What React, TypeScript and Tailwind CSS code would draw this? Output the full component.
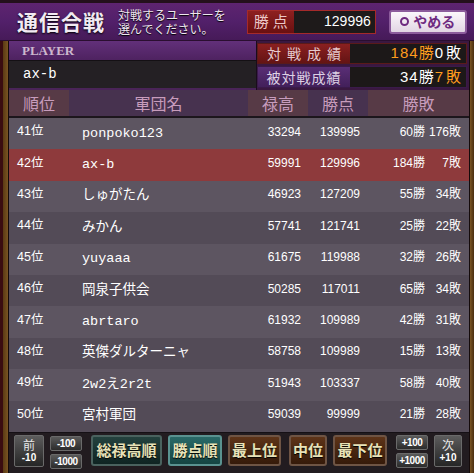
const rows = [
  { rank: 41, name: "ponpoko123", koku: 33294, pts: 139995, win: 60, lose: 176 },
  { rank: 42, name: "ax-b", koku: 59991, pts: 129996, win: 184, lose: 7, me: true },
  { rank: 43, name: "しゅがたん", koku: 46923, pts: 127209, win: 55, lose: 34 },
  { rank: 44, name: "みかん", koku: 57741, pts: 121741, win: 25, lose: 22 },
  { rank: 45, name: "yuyaaa", koku: 61675, pts: 119988, win: 32, lose: 26 },
  { rank: 46, name: "岡泉子供会", koku: 50285, pts: 117011, win: 65, lose: 34 },
  { rank: 47, name: "abrtaro", koku: 61932, pts: 109989, win: 42, lose: 31 },
  { rank: 48, name: "英傑ダルターニャ", koku: 58758, pts: 109989, win: 15, lose: 13 },
  { rank: 49, name: "2w2え2r2t", koku: 51943, pts: 103337, win: 58, lose: 40 },
  { rank: 50, name: "宮村軍団", koku: 59039, pts: 99999, win: 21, lose: 28 },
];

const sans = "font-['Liberation_Sans','Noto_Sans_CJK_JP',sans-serif]";
const mono = "font-['Liberation_Mono','Noto_Sans_CJK_JP',monospace]";
const jp = "font-['Noto_Sans_CJK_JP',sans-serif]";

const SmallBtn = ({ label }: { label: string }) => (
  <div className="w-[32px] h-[15px] flex items-center justify-center rounded-[2px] border border-[#6a6a6a] bg-gradient-to-b from-[#5a5a5a] to-[#2c2c2c] text-[10px] font-bold text-white tracking-[-0.5px] font-['Liberation_Sans',sans-serif]">
    {label}
  </div>
);

const SortBtn = ({ label, w, kind }: { label: string; w: string; kind: "teal" | "tealOn" | "brown" }) => {
  const cls =
    kind === "teal"
      ? "from-[#24423e] to-[#0f2422] border-[#4a625e]"
      : kind === "tealOn"
      ? "from-[#2a6a68] to-[#154442] border-[#5a9290]"
      : "from-[#5e3418] to-[#351a0a] border-[#6e5444]";
  return (
    <div
      className={`${w} h-[31px] flex items-center justify-center rounded-[3px] border-2 bg-gradient-to-b ${cls} text-[15px] font-bold text-[#e8e2b8] ${jp} [text-shadow:0_1px_1px_#000]`}
    >
      {label}
    </div>
  );
};

const PageBtn = ({ top, bottom, w }: { top: string; bottom: string; w: string }) => (
  <div className={`${w} h-[32px] flex flex-col items-center justify-center rounded-[2px] border border-[#6a6a6a] bg-gradient-to-b from-[#5c5c5c] to-[#262626] text-white leading-none`}>
    <span className={`text-[12px] ${jp} text-[#e8e8e8]`}>{top}</span>
    <span className="text-[10px] font-bold mt-[2px] font-['Liberation_Sans',sans-serif]">{bottom}</span>
  </div>
);

export default function App() {
  return (
    <div className="w-[474px] h-[473px] overflow-hidden bg-[#1a0e14] flex flex-col">
      {/* header */}
      <div className="h-[41px] flex items-center border-t-[3px] border-[#24101c] bg-gradient-to-b from-[#5e2470] via-[#52206a] to-[#461a58] border-b border-b-[#2a0e30]">
        <div className={`ml-[17px] text-[21px] font-bold tracking-[1px] text-[#f2eaf2] ${jp} [text-shadow:0_1px_2px_#000] leading-none`}>
          通信合戦
        </div>
        <div className={`ml-[13px] flex flex-col text-[12px] text-[#efe6ef] ${jp} [text-shadow:0_1px_1px_#000]`}>
          <div className="h-[14px] leading-[14px]">対戦するユーザーを</div>
          <div className="h-[14px] leading-[14px]">選んでください。</div>
        </div>
        <div className="ml-[21px] w-[129px] h-[24px] flex border border-[#a52a2a] bg-[#1e1a1a]">
          <div className={`w-[46px] flex items-center justify-center bg-gradient-to-b from-[#8e2020] to-[#6a1010] text-[15px] tracking-[4px] pl-[4px] text-[#ecc8c8] ${jp}`}>
            勝点
          </div>
          <div className={`flex-1 flex items-center justify-end pr-[4px] text-[14px] text-white ${sans}`}>129996</div>
        </div>
        <div className={`ml-[13px] w-[78px] h-[24px] flex items-center justify-center gap-[4px] rounded-[3px] border-2 border-[#8c5c9c] bg-gradient-to-b from-[#fbf7fb] to-[#e2d6e4] text-[14px] font-bold text-[#6e2a80] ${jp}`}>
          <span className="w-[9px] h-[9px] rounded-full border-[2.5px] border-[#6e2a80]" />
          やめる
        </div>
      </div>

      <div className="flex flex-1">
        {/* left frame */}
        <div className="w-[9px] flex">
          <div className="w-[3px] bg-[#3a0c10]" />
          <div className="w-[5px] bg-gradient-to-r from-[#5a3a14] to-[#7a5422]" />
          <div className="w-[1px] bg-[#140a0a]" />
        </div>

        <div className="w-[460px] flex flex-col">
          {/* player section */}
          <div className="h-[49px] flex bg-[#3a1840]">
            <div className="w-[247px] flex flex-col">
              <div className="h-[19px] flex items-center pl-[13px] bg-gradient-to-b from-[#62307a] to-[#4e2260] text-[13px] font-bold text-[#cdb8cd] font-['Liberation_Serif',serif]">
                PLAYER
              </div>
              <div className={`h-[28px] flex items-center pl-[14px] bg-[#242024] border-t border-[#141014] text-[14px] text-white ${mono}`}>
                ax-b
              </div>
              <div className="h-[2px] bg-[#4a2458]" />
            </div>
            <div className="w-[1px] bg-[#1a0c1c]" />
            <div className="flex-1 flex flex-col pt-[2px] gap-[2px] pr-[2px]">
              <div className="h-[21px] flex border border-[#5a1a1a]">
                <div className={`w-[92px] flex items-center justify-center bg-gradient-to-b from-[#8a2020] to-[#641414] text-[14px] tracking-[6px] pl-[6px] text-[#e6cace] ${jp}`}>
                  対戦成績
                </div>
                <div className={`flex-1 flex items-center justify-end pr-[5px] bg-[#1c1818] text-[15px] ${sans}`}>
                  <span className="text-[#ff9c1e] tracking-[1px]">184勝</span>
                  <span className="text-white">0</span>
                  <span className="text-white ml-[3px]">敗</span>
                </div>
              </div>
              <div className="h-[22px] flex border border-[#3a1a4a]">
                <div className={`w-[92px] flex items-center justify-center bg-gradient-to-b from-[#5a2e76] to-[#42205a] text-[14px] tracking-[1px] text-[#ddd0e4] ${jp}`}>
                  被対戦成績
                </div>
                <div className={`flex-1 flex items-center justify-end pr-[5px] bg-[#1c1818] text-[15px] ${sans}`}>
                  <span className="text-white tracking-[1px]">34勝</span>
                  <span className="text-[#ff9c1e]">7</span>
                  <span className="text-[#ff9c1e] ml-[3px]">敗</span>
                </div>
              </div>
            </div>
          </div>

          {/* table header */}
          <div className={`h-[26px] flex text-[16px] text-[#c79cbc] ${jp}`}>
            <div className="w-[60px] flex items-center justify-center bg-[#573a46]">順位</div>
            <div className="w-[179px] flex items-center justify-center bg-[#47324f]">軍団名</div>
            <div className="w-[60px] flex items-center justify-center bg-[#573a46]">禄高</div>
            <div className="w-[60px] flex items-center justify-center bg-[#47324f]">勝点</div>
            <div className="flex-1 flex items-center justify-center bg-[#573a46]">勝敗</div>
          </div>
          <div className="h-[2px] bg-[#1c161c]" />

          {/* rows */}
          <div className="flex flex-col">
            {rows.map((r, i) => (
              <div
                key={r.rank}
                className={`h-[31.4px] flex items-center text-white ${
                  r.me ? "bg-[#8e3a3c]" : i % 2 === 0 ? "bg-[#5d5561]" : "bg-[#534b57]"
                }`}
              >
                <div className={`w-[73px] pl-[8px] pb-[4px] text-[12.5px] ${sans}`}>{r.rank}位</div>
                <div className={`w-[174px] text-[13.5px] ${mono}`}>{r.name}</div>
                <div className={`w-[45px] pb-[4px] text-right text-[12px] ${sans}`}>{r.koku}</div>
                <div className={`w-[59px] pb-[4px] text-right text-[12px] ${sans}`}>{r.pts}</div>
                <div className={`w-[65px] pb-[4px] text-right text-[12px] ${sans}`}>{r.win}勝</div>
                <div className={`w-[36px] pb-[4px] text-right text-[12px] ${sans}`}>{r.lose}敗</div>
              </div>
            ))}
          </div>

          {/* bottom controls */}
          <div className="flex-1 flex items-start pt-[2px] bg-[#221c20] border-t border-[#151015]">
            <div className="ml-[5px]">
              <PageBtn top="前" bottom="-10" w="w-[30px]" />
            </div>
            <div className="ml-[6px] flex flex-col gap-[3px] pt-[1px]">
              <SmallBtn label="-100" />
              <SmallBtn label="-1000" />
            </div>
            <div className="ml-[9px]">
              <SortBtn label="総禄高順" w="w-[71px]" kind="teal" />
            </div>
            <div className="ml-[6px]">
              <SortBtn label="勝点順" w="w-[54px]" kind="tealOn" />
            </div>
            <div className="ml-[6px]">
              <SortBtn label="最上位" w="w-[53px]" kind="brown" />
            </div>
            <div className="ml-[8px]">
              <SortBtn label="中位" w="w-[38px]" kind="brown" />
            </div>
            <div className="ml-[6px]">
              <SortBtn label="最下位" w="w-[54px]" kind="brown" />
            </div>
            <div className="ml-[9px] flex flex-col gap-[3px]">
              <SmallBtn label="+100" />
              <SmallBtn label="+1000" />
            </div>
            <div className="ml-[6px]">
              <PageBtn top="次" bottom="+10" w="w-[28px]" />
            </div>
          </div>
        </div>

        {/* right frame */}
        <div className="flex-1 flex">
          <div className="w-[1px] bg-[#140a0a]" />
          <div className="w-[4px] bg-gradient-to-r from-[#7a5422] to-[#4a2e10]" />
        </div>
      </div>
    </div>
  );
}
